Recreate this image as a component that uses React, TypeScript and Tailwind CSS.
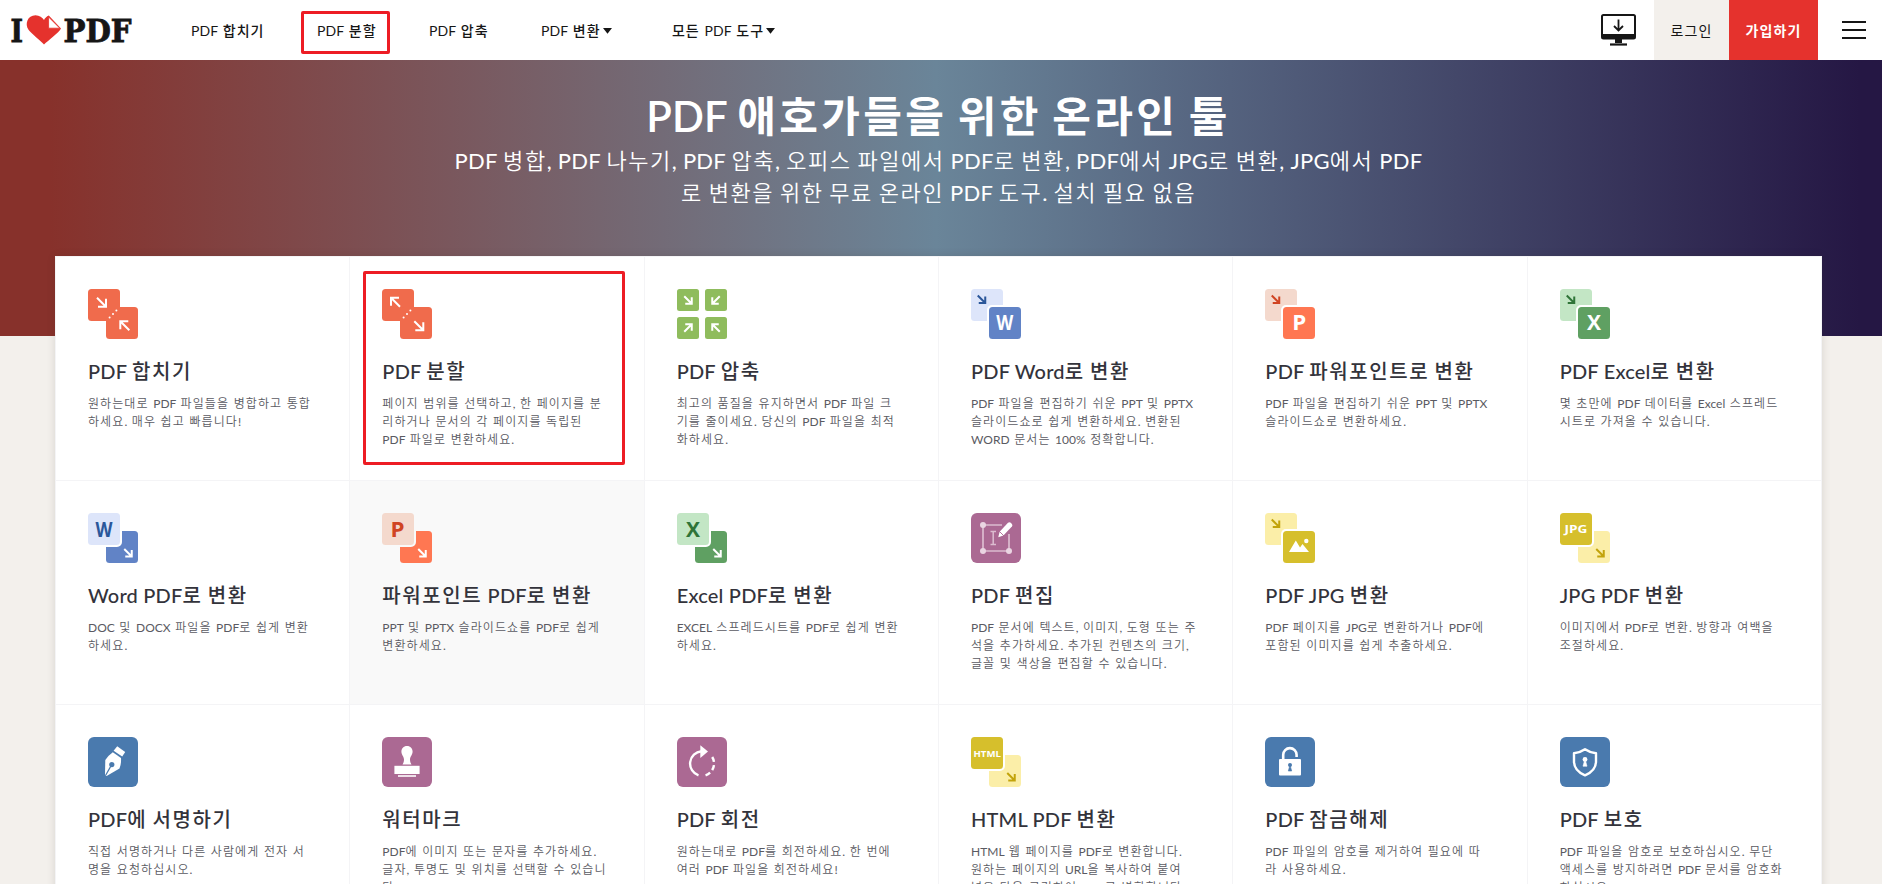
import React from "react"

interface Tool {
  title: string;
  lines: string[];
  icon: React.ReactNode;
  hovered?: boolean;
  marked?: boolean;
}

const HANGUL = /([\uac00-\ud7a3]+)/

function Mixed({ text, hangul = "tracking-[0.08em]", latin = "" }: { text: string; hangul?: string; latin?: string }) {
  return (
    <>
      {text.split(HANGUL).map((part, i) => (
        <span key={i} className={HANGUL.test(part) ? hangul : latin}>{part}</span>
      ))}
    </>
  )
}

function IconBox({ children }: { children: React.ReactNode }) {
  return (
    <svg width="50" height="50" viewBox="0 0 50 50" fill="none" className="block shrink-0">
      {children}
    </svg>
  )
}

// Small diagonal arrow, points to the bottom right unless rotated
function Arrow({ x, y, size = 9, rotate = 0, color = "#fff", width = 2 }: { x: number; y: number; size?: number; rotate?: number; color?: string; width?: number }) {
  const h = size / 2
  return (
    <g transform={`translate(${x} ${y}) rotate(${rotate})`}>
      <path d={`M${-h} ${-h}L${h} ${h}M${h} ${-h + 1}V${h}H${-h + 1}`} stroke={color} strokeWidth={width} />
    </g>
  )
}

function Letter({ x, y, size, length, color = "#fff", children }: { x: number; y: number; size: number; length: number; color?: string; children: string }) {
  return (
    <text
      x={x}
      y={y}
      textAnchor="middle"
      textLength={length}
      lengthAdjust="spacingAndGlyphs"
      fontSize={size}
      fill={color}
      className="font-['Open_Sans','Noto_Sans',sans-serif] font-bold"
    >
      {children}
    </text>
  )
}

function PairIcon({ out }: { out?: boolean }) {
  return (
    <IconBox>
      <rect width="32" height="32" rx="3.5" fill="#f06b4c" />
      <rect x="18" y="18" width="32" height="32" rx="3.5" fill="#f06b4c" />
      <Arrow x={13.5} y={13.2} rotate={out ? 180 : 0} />
      <Arrow x={36.8} y={36.8} rotate={out ? 0 : 180} />
      <g fill="#fff">
        <circle cx="21.6" cy="28.4" r="1" />
        <circle cx="25" cy="25" r="1" />
        <circle cx="28.4" cy="21.6" r="1" />
      </g>
    </IconBox>
  )
}

function CompressIcon() {
  return (
    <IconBox>
      <rect width="22" height="22" rx="2.5" fill="#8fbc5d" />
      <rect x="28" width="22" height="22" rx="2.5" fill="#8fbc5d" />
      <rect y="28" width="22" height="22" rx="2.5" fill="#8fbc5d" />
      <rect x="28" y="28" width="22" height="22" rx="2.5" fill="#8fbc5d" />
      <Arrow x={11} y={11} size={7.5} />
      <Arrow x={39} y={11} size={7.5} rotate={90} />
      <Arrow x={11} y={39} size={7.5} rotate={-90} />
      <Arrow x={39} y={39} size={7.5} rotate={180} />
    </IconBox>
  )
}

function FromPdfIcon({ back, front, arrow, children }: { back: string; front: string; arrow: string; children: React.ReactNode }) {
  return (
    <IconBox>
      <rect width="32" height="32" rx="3.5" fill={back} />
      <rect x="16" y="16" width="36" height="36" rx="5" fill="#fff" />
      <rect x="18" y="18" width="32" height="32" rx="3.5" fill={front} />
      <Arrow x={10.5} y={10.2} size={7.5} color={arrow} />
      {children}
    </IconBox>
  )
}

function ToPdfIcon({ back, front, arrow, gap = "#fff", children }: { back: string; front: string; arrow: string; gap?: string; children: React.ReactNode }) {
  return (
    <IconBox>
      <rect x="18" y="18" width="32" height="32" rx="3.5" fill={back} />
      <rect x="-2" y="-2" width="36" height="36" rx="5" fill={gap} />
      <rect width="32" height="32" rx="3.5" fill={front} />
      <Arrow x={40} y={39.8} size={7.5} color={arrow} />
      {children}
    </IconBox>
  )
}

function EditIcon() {
  return (
    <IconBox>
      <rect width="50" height="50" rx="6" fill="#ab6993" />
      <path d="M12 12V38H38V21M12 12H31" stroke="#dcbcd0" strokeWidth="1.7" />
      <circle cx="12" cy="12" r="3" fill="#ead5e2" />
      <circle cx="12" cy="38" r="3" fill="#ead5e2" />
      <circle cx="38" cy="38" r="3" fill="#ead5e2" />
      <path d="M19.5 18.5H25M19.5 31.5H25M22.2 18.5V31.5" stroke="#dcbcd0" strokeWidth="1.5" />
      <path d="M27.3 24.3L28.6 18.8L37 9.8Q38.3 8.6 39.8 9.8L40.9 10.9Q42 12.3 40.9 13.6L32.4 22.6Z" fill="#fff" />
      <path d="M28.2 18.2L33 23" stroke="#ab6993" strokeWidth=".9" />
    </IconBox>
  )
}

function SignIcon() {
  return (
    <IconBox>
      <rect width="50" height="50" rx="6" fill="#4a7aae" />
      <path d="M29.2 9.3L37.2 15L34.2 19.5L25.6 13.8Z" fill="#fff" />
      <path d="M24.8 15.2L33 20.9Q33.4 27 31.5 31.6L18.6 38.9L17 37.5L17.3 23.1Q20.2 18.4 24.8 15.2Z" fill="#fff" />
      <circle cx="23.8" cy="27.6" r="2.6" fill="#4a7aae" />
      <path d="M23.5 28L17.8 38" stroke="#4a7aae" strokeWidth="1.3" />
    </IconBox>
  )
}

function StampIcon() {
  return (
    <IconBox>
      <rect width="50" height="50" rx="6" fill="#ab6993" />
      <path d="M25 9C28.5 9 30.6 11.6 30.6 14.5C30.6 18 28 19.4 28 22.5C28 25 29 26.5 29.5 27.6H20.5C21 26.5 22 25 22 22.5C22 19.4 19.4 18 19.4 14.5C19.4 11.6 21.5 9 25 9Z" fill="#fff" />
      <path d="M12.4 28.8H37.6V37H12.4Z" fill="#fff" />
      <path d="M16 39H34" stroke="#fff" strokeWidth="1.6" />
    </IconBox>
  )
}

function RotateIcon() {
  return (
    <IconBox>
      <rect width="50" height="50" rx="6" fill="#ab6993" />
      <path d="M24.5 14.2A12.4 12.4 0 0 0 21.5 38.3" stroke="#fff" strokeWidth="2.4" />
      <path d="M23.3 8.2L31 14.6L23.3 21Z" fill="#fff" />
      <path d="M35.2 20A12.4 12.4 0 0 1 25.5 38.9" stroke="#fff" strokeWidth="2.4" strokeDasharray="5.2 3.2" />
    </IconBox>
  )
}

function UnlockIcon() {
  return (
    <IconBox>
      <rect width="50" height="50" rx="6" fill="#4a7aae" />
      <path d="M18.2 23V17.8A6.7 6.7 0 0 1 31.6 17.8V20" stroke="#fff" strokeWidth="2.6" />
      <rect x="14" y="22" width="22" height="16.6" rx="1" fill="#fff" />
      <circle cx="25" cy="28" r="2" fill="#4a7aae" />
      <path d="M25 28L26.7 34H23.3Z" fill="#4a7aae" stroke="#4a7aae" strokeWidth=".6" />
    </IconBox>
  )
}

function ShieldIcon() {
  return (
    <IconBox>
      <rect width="50" height="50" rx="6" fill="#4a7aae" />
      <path d="M25 12.2C28.5 14.6 32 15.8 36 16.2V24.5C36 31 31.5 35.6 25 38.4C18.5 35.6 14 31 14 24.5V16.2C18 15.8 21.5 14.6 25 12.2Z" stroke="#fff" strokeWidth="2.4" strokeLinejoin="round" />
      <circle cx="25" cy="22.4" r="2.4" fill="#fff" />
      <path d="M25 22L27 29.2H23Z" fill="#fff" stroke="#fff" strokeWidth=".6" />
    </IconBox>
  )
}

const tools: Tool[] = [
  { title: "PDF 합치기", lines: ["원하는대로 PDF 파일들을 병합하고 통합", "하세요. 매우 쉽고 빠릅니다!"], icon: <PairIcon /> },
  { title: "PDF 분할", lines: ["페이지 범위를 선택하고, 한 페이지를 분", "리하거나 문서의 각 페이지를 독립된", "PDF 파일로 변환하세요."], icon: <PairIcon out />, marked: true },
  { title: "PDF 압축", lines: ["최고의 품질을 유지하면서 PDF 파일 크", "기를 줄이세요. 당신의 PDF 파일을 최적", "화하세요."], icon: <CompressIcon /> },
  {
    title: "PDF Word로 변환",
    lines: ["PDF 파일을 편집하기 쉬운 PPT 및 PPTX", "슬라이드쇼로 쉽게 변환하세요. 변환된", "WORD 문서는 100% 정확합니다."],
    icon: <FromPdfIcon back="#dde5fa" front="#6183c6" arrow="#2b579a"><Letter x={33.8} y={41.3} size={21} length={17}>W</Letter></FromPdfIcon>,
  },
  {
    title: "PDF 파워포인트로 변환",
    lines: ["PDF 파일을 편집하기 쉬운 PPT 및 PPTX", "슬라이드쇼로 변환하세요."],
    icon: <FromPdfIcon back="#f4d9cd" front="#ff7752" arrow="#d04423"><Letter x={34.3} y={41.3} size={21} length={14}>P</Letter></FromPdfIcon>,
  },
  {
    title: "PDF Excel로 변환",
    lines: ["몇 초만에 PDF 데이터를 Excel 스프레드", "시트로 가져올 수 있습니다."],
    icon: <FromPdfIcon back="#c3e6c5" front="#5fa062" arrow="#2f7438"><Letter x={34} y={41.3} size={21} length={14}>X</Letter></FromPdfIcon>,
  },
  {
    title: "Word PDF로 변환",
    lines: ["DOC 및 DOCX 파일을 PDF로 쉽게 변환", "하세요."],
    icon: <ToPdfIcon back="#6183c6" front="#dde5fa" arrow="#fff"><Letter x={16} y={23.5} size={21} length={17} color="#2b579a">W</Letter></ToPdfIcon>,
  },
  {
    title: "파워포인트 PDF로 변환",
    lines: ["PPT 및 PPTX 슬라이드쇼를 PDF로 쉽게", "변환하세요."],
    icon: <ToPdfIcon back="#ff7752" front="#f4d9cd" arrow="#fff" gap="#f9f9f9"><Letter x={15.5} y={23.5} size={21} length={14} color="#d04423">P</Letter></ToPdfIcon>,
    hovered: true,
  },
  {
    title: "Excel PDF로 변환",
    lines: ["EXCEL 스프레드시트를 PDF로 쉽게 변환", "하세요."],
    icon: <ToPdfIcon back="#5fa062" front="#c3e6c5" arrow="#fff"><Letter x={16} y={23.5} size={21} length={14} color="#2f7438">X</Letter></ToPdfIcon>,
  },
  { title: "PDF 편집", lines: ["PDF 문서에 텍스트, 이미지, 도형 또는 주", "석을 추가하세요. 추가된 컨텐츠의 크기,", "글꼴 및 색상을 편집할 수 있습니다."], icon: <EditIcon /> },
  {
    title: "PDF JPG 변환",
    lines: ["PDF 페이지를 JPG로 변환하거나 PDF에", "포함된 이미지를 쉽게 추출하세요."],
    icon: (
      <FromPdfIcon back="#fbeea8" front="#d6bf2c" arrow="#c2a30b">
        <path d="M24 39L30.8 27.6L35 34.5L37.5 31L44 39Z" fill="#fff" />
        <circle cx="41.3" cy="28" r="2.2" fill="#fff" />
      </FromPdfIcon>
    ),
  },
  {
    title: "JPG PDF 변환",
    lines: ["이미지에서 PDF로 변환. 방향과 여백을", "조절하세요."],
    icon: <ToPdfIcon back="#fbeea8" front="#d6bf2c" arrow="#c2a30b"><Letter x={16} y={20} size={11} length={23}>JPG</Letter></ToPdfIcon>,
  },
  { title: "PDF에 서명하기", lines: ["직접 서명하거나 다른 사람에게 전자 서", "명을 요청하십시오."], icon: <SignIcon /> },
  { title: "워터마크", lines: ["PDF에 이미지 또는 문자를 추가하세요.", "글자, 투명도 및 위치를 선택할 수 있습니", "다."], icon: <StampIcon /> },
  { title: "PDF 회전", lines: ["원하는대로 PDF를 회전하세요. 한 번에", "여러 PDF 파일을 회전하세요!"], icon: <RotateIcon /> },
  {
    title: "HTML PDF 변환",
    lines: ["HTML 웹 페이지를 PDF로 변환합니다.", "원하는 페이지의 URL을 복사하여 붙여", "넣은 다음 클릭하여 PDF로 변환합니다."],
    icon: <ToPdfIcon back="#fbeea8" front="#d6bf2c" arrow="#c2a30b"><Letter x={16.2} y={19.5} size={9.5} length={27.5}>HTML</Letter></ToPdfIcon>,
  },
  { title: "PDF 잠금해제", lines: ["PDF 파일의 암호를 제거하여 필요에 따", "라 사용하세요."], icon: <UnlockIcon /> },
  { title: "PDF 보호", lines: ["PDF 파일을 암호로 보호하십시오. 무단", "액세스를 방지하려면 PDF 문서를 암호화", "하십시오."], icon: <ShieldIcon /> },
]

function Logo() {
  return (
    <svg width="124" height="42" viewBox="-1 -5 124 42" className="block overflow-visible">
      <g fill="#161616" stroke="#161616" strokeWidth=".9" fontSize="32" className="font-['DejaVu_Serif',serif] font-bold">
        <text x="0.5" y="27.5" textLength="12.5" lengthAdjust="spacingAndGlyphs">I</text>
        <text x="53.5" y="27.5" textLength="68" lengthAdjust="spacingAndGlyphs">PDF</text>
      </g>
      <path d="M34 30.5C31 27 21 19.5 18.5 15.8C14.5 10 17.5 1.2 25.5 1.2C29.5 1.2 32.5 3.4 34 6C35 4 36.5 2.5 38.8 1.5L51 14.5C49 18.5 38 26.5 34 30.5Z" fill="#e5322d" />
      <path d="M38.6 3V14.2H49.8Z" fill="#fff" stroke="#e5322d" strokeWidth=".8" />
    </svg>
  )
}

function Caret() {
  return (
    <svg width="9" height="6" viewBox="0 0 9 6" className="ml-[2px]">
      <path d="M0 0H9L4.5 5.8Z" fill="#161616" />
    </svg>
  )
}

function NavText({ text }: { text: string }) {
  return <Mixed text={text} hangul="tracking-[0.07em] font-medium" latin="tracking-[0.01em] [word-spacing:1px] font-normal" />
}

function Header() {
  return (
    <header className="flex h-[60px] items-stretch bg-white text-sm text-[#161616]">
      <div className="flex w-[191px] items-center pl-[9px]">
        <Logo />
      </div>
      <nav className="flex items-center whitespace-nowrap pt-px">
        <a className="w-[126px]"><NavText text="PDF 합치기" /></a>
        <a className="relative w-[112px]">
          <NavText text="PDF 분할" />
          <span className="absolute -left-[16px] -top-[10px] h-[43px] w-[89px] rounded-[2px] border-[3px] border-[#ed1c24]" />
        </a>
        <a className="w-[112px]"><NavText text="PDF 압축" /></a>
        <a className="flex w-[131px] items-center"><span><NavText text="PDF 변환" /></span><Caret /></a>
        <a className="flex items-center"><span><NavText text="모든 PDF 도구" /></span><Caret /></a>
      </nav>
      <div className="ml-auto flex items-stretch">
        <div className="flex w-[53px] items-center">
          <svg width="35" height="32" viewBox="0 0 35 32" fill="none">
            <rect x="1" y="1" width="33" height="23.5" rx="1.5" stroke="#161616" strokeWidth="2" />
            <path d="M1 20H34V24H1ZM14 25H21V29H14Z" fill="#161616" />
            <path d="M9 30.5H26" stroke="#161616" strokeWidth="2.2" />
            <path d="M17.5 5.5V16.5M13 12L17.5 16.5L22 12" stroke="#161616" strokeWidth="1.8" />
          </svg>
        </div>
        <a className="flex w-[75px] items-center justify-center bg-[#f3f0ec] pt-px"><Mixed text="로그인" /></a>
        <a className="flex w-[89px] items-center justify-center bg-[#e5322d] pt-px font-bold text-white"><Mixed text="가입하기" hangul="tracking-[0.08em]" /></a>
        <div className="flex w-16 flex-col justify-center gap-[6px] pl-6">
          <span className="h-[2px] w-6 bg-[#161616]" />
          <span className="h-[2px] w-6 bg-[#161616]" />
          <span className="h-[2px] w-6 bg-[#161616]" />
        </div>
      </div>
    </header>
  )
}

function ToolCard({ tool }: { tool: Tool }) {
  return (
    <div className={`relative h-56 border-b border-r border-[#f4f4f6] pl-8 pt-8 ${tool.hovered ? "bg-[#f9f9f9]" : "bg-white"}`}>
      {tool.icon}
      <h3 className="mt-5 whitespace-nowrap text-xl leading-6 font-medium text-[#33333b]">
        <Mixed text={tool.title} latin="tracking-[0.01em]" />
      </h3>
      <p className="mt-3 whitespace-nowrap text-xs leading-[18px] text-[#5a5a62]">
        {tool.lines.map((line) => (
          <span key={line} className="block">
            <Mixed text={line} hangul="tracking-[0.09em] font-[350]" latin="[word-spacing:1.5px] font-normal" />
          </span>
        ))}
      </p>
      {tool.marked && <span className="absolute left-[13px] top-[14px] h-[194px] w-[262px] rounded-[2px] border-[3px] border-[#ed1c24]" />}
    </div>
  )
}

export default function App() {
  return (
    <div className="h-[884px] overflow-hidden bg-[#f3f0ec] font-['Lato','Noto_Sans_CJK_KR',sans-serif]">
      <Header />
      <section className="h-[276px] bg-[linear-gradient(90deg,#87312b_50px,#6a8599_936px,#251744_1860px)] pl-[55px] pr-[60px] text-center text-white">
        <h1 className="pt-[30px] text-[42px] leading-[52px] whitespace-nowrap">
          <Mixed text="PDF 애호가들을 위한 온라인 툴" hangul="tracking-[0.08em] font-bold" latin="font-semibold" />
        </h1>
        <p className="mt-[3px] text-[22px] leading-8 font-normal whitespace-nowrap">
          <Mixed
            text="PDF 병합, PDF 나누기, PDF 압축, 오피스 파일에서 PDF로 변환, PDF에서 JPG로 변환, JPG에서 PDF"
            hangul="tracking-[0.07em] font-[350]"
            latin="tracking-[0.012em]"
          />
          <br />
          <Mixed text="로 변환을 위한 무료 온라인 PDF 도구. 설치 필요 없음" hangul="tracking-[0.07em] font-[350]" latin="tracking-[0.012em]" />
        </p>
      </section>
      <main className="relative -mt-20 ml-[55px] grid w-[1767px] grid-cols-6 border-l border-t border-[#f4f4f6] bg-white shadow-[0_0_8px_rgba(60,40,30,0.14)]">
        {tools.map((tool) => (
          <ToolCard key={tool.title} tool={tool} />
        ))}
      </main>
    </div>
  )
}
